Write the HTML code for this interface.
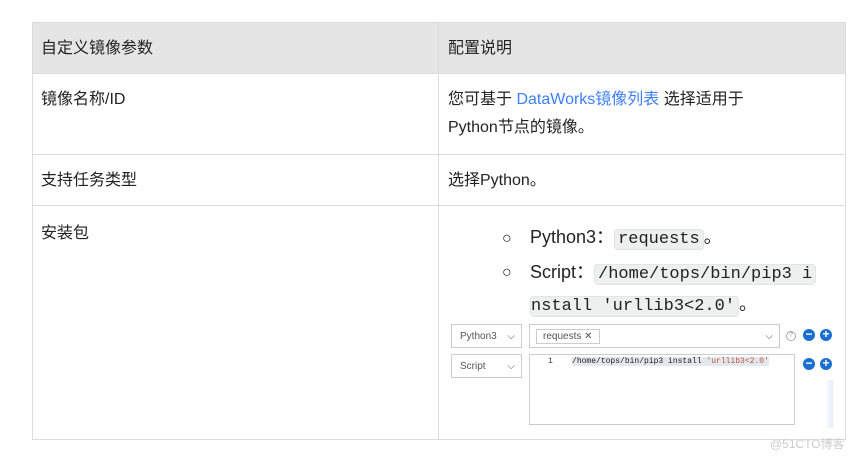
<!DOCTYPE html>
<html><head><meta charset="utf-8"><style>
body{margin:0;width:868px;height:460px;background:#fff;font-family:"Liberation Sans","Noto Sans CJK SC",sans-serif;color:#222;position:relative;overflow:hidden}
.a{position:absolute}
.cell{position:absolute;font-size:16px;line-height:28px}
code{font-family:"Liberation Mono","Noto Sans CJK SC",monospace;background:#eeefef;border:1px solid #e4e4e4;border-radius:4px;padding:0 3px;font-size:17px}
.sel{position:absolute;border:1px solid #ccc;background:#fff;font-size:10px;color:#555;box-sizing:border-box;display:flex;align-items:center;justify-content:space-between;white-space:nowrap;overflow:hidden}
.circ{position:absolute;width:12px;height:12px;border-radius:50%;background:#1a6fd0;color:#fff;font-size:12px;line-height:11px;text-align:center;font-weight:bold}
</style></head><body>
<div class="a" style="left:32px;top:22px;width:813px;height:51px;background:#e5e5e5"></div>
<div class="a" style="left:32px;top:22px;width:812px;height:416px;border:1px solid #dcdcdc"></div>
<div class="a" style="left:438px;top:22px;width:1px;height:417px;background:#dcdcdc"></div>
<div class="a" style="left:32px;top:73px;width:813px;height:1px;background:#dcdcdc"></div>
<div class="a" style="left:32px;top:154px;width:813px;height:1px;background:#dcdcdc"></div>
<div class="a" style="left:32px;top:205px;width:813px;height:1px;background:#dcdcdc"></div>
<div class="cell" style="left:41px;top:35px">自定义镜像参数</div>
<div class="cell" style="left:448px;top:35px">配置说明</div>
<div class="cell" style="left:41px;top:86px">镜像名称/ID</div>
<div class="cell" style="left:448px;top:86px;width:380px">您可基于 <span style="color:#3d7fff">DataWorks镜像列表</span> 选择适用于<br>Python节点的镜像。</div>
<div class="cell" style="left:41px;top:167px">支持任务类型</div>
<div class="cell" style="left:448px;top:167px">选择Python。</div>
<div class="cell" style="left:41px;top:220px">安装包</div>
<div class="cell" style="left:502px;top:222px;font-size:16px;line-height:34px">○</div>
<div class="cell" style="left:502px;top:256px;font-size:16px;line-height:34px">○</div>
<div class="cell" style="left:530px;top:221px;font-size:18px;line-height:32px;width:300px;white-space:nowrap">Python3：<code>requests</code>。<br>Script：<code>/home/tops/bin/pip3 i</code><br><span style="position:relative;top:-3px"><code style="padding-left:0">nstall 'urllib3&lt;2.0'</code>。</span></div>
<div class="sel" style="left:451px;top:324px;width:71px;height:24px;padding:0 6px 0 8px"><span>Python3</span><span>⌵</span></div>
<div class="sel" style="left:529px;top:324px;width:251px;height:24px;padding:0 6px"><span style="border:1px solid #ccc;padding:1px 6px">requests ✕</span><span>⌵</span></div>
<div class="a" style="left:786px;top:331px;width:8px;height:8px;border:1px solid #aaa;border-radius:50%;font-size:7px;line-height:8px;text-align:center;color:#999">?</div>
<div class="circ" style="left:803px;top:329px">−</div><div class="circ" style="left:820px;top:329px">+</div>
<div class="sel" style="left:451px;top:354px;width:71px;height:24px;padding:0 6px 0 8px"><span>Script</span><span>⌵</span></div>
<div class="a" style="left:529px;top:354px;width:266px;height:71px;border:1px solid #ccc;box-sizing:border-box;font-family:'Liberation Mono',monospace;font-size:8px;padding:2px 0 0 18px;white-space:nowrap"><span style="color:#333">1</span>&nbsp;&nbsp;&nbsp;&nbsp;<span style="background:#e3e7ee">/home/tops/bin/pip3 install <span style="color:#b54">'urllib3&lt;2.0'</span></span></div>
<div class="circ" style="left:803px;top:358px">−</div><div class="circ" style="left:820px;top:358px">+</div>
<div class="a" style="left:825px;top:380px;width:8px;height:48px;background:linear-gradient(90deg,#fff,#e8eaf6)"></div>
<div class="a" style="left:770px;top:435px;font-size:12px;color:#ccc">@51CTO博客</div>
</body></html>
